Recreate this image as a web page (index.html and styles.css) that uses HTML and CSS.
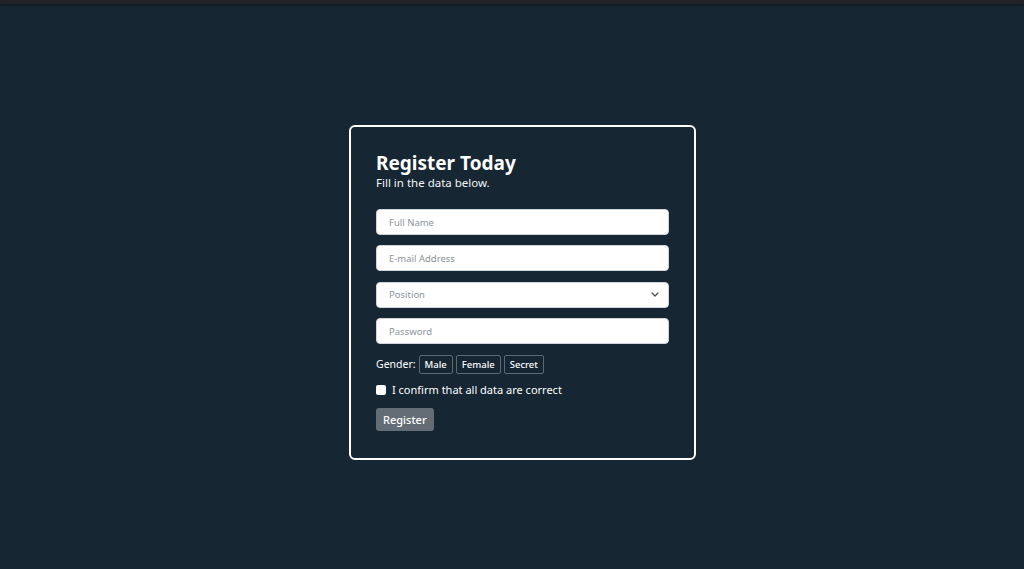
FILE: index.html
```html
<!DOCTYPE html>
<html>
<head>
<meta charset="utf-8">
<link rel="stylesheet" href="styles.css">
</head>
<body>
<div class="topbar"></div>
<main class="stage">
  <form class="card">
    <h1 class="title">Register Today</h1>
    <p class="subtitle">Fill in the data below.</p>
    <div class="fields">
      <input class="field" type="text" placeholder="Full Name">
      <input class="field" type="text" placeholder="E-mail Address">
      <div class="field select">
        <span class="placeholder">Position</span>
        <svg class="chev" width="8" height="5" viewBox="0 0 8 5"><path d="M1 1l3 3 3-3" fill="none" stroke="#4a5056" stroke-width="1.3" stroke-linecap="round" stroke-linejoin="round"/></svg>
      </div>
      <input class="field" type="password" placeholder="Password">
    </div>
    <div class="gender">
      <span class="gender-label">Gender:</span>
      <span class="chip">Male</span>
      <span class="chip">Female</span>
      <span class="chip">Secret</span>
    </div>
    <label class="confirm"><span class="box"></span>I confirm that all data are correct</label>
    <button class="submit" type="button">Register</button>
  </form>
</main>
</body>
</html>
```

FILE: styles.css
```css
html, body {
  margin: 0;
  padding: 0;
  background: #162633;
  height: 100%;
  font-family: "Noto Sans", "Open Sans", sans-serif;
  color: #ffffff;
}
.topbar {
  height: 4px;
  background: #232227;
  box-shadow: 0 1px 3px rgba(0,0,0,0.45);
}
.stage {
  display: flex;
  justify-content: center;
  padding-top: 121px;
  padding-left: 21px;
}
.card {
  width: 293px;
  padding: 24px 25px 27px;
  border: 2px solid #ffffff;
  border-radius: 6px;
  box-sizing: content-box;
  margin: 0;
}
.title {
  margin: 0;
  font-size: 19px;
  line-height: 24px;
  font-weight: 700;
  letter-spacing: 0;
}
.subtitle {
  margin: 0;
  font-size: 11.5px;
  line-height: 15px;
  color: #f2f4f6;
}
.fields {
  display: flex;
  flex-direction: column;
  gap: 10.4px;
  margin-top: 19px;
}
.field {
  box-sizing: border-box;
  display: block;
  width: 100%;
  height: 26px;
  margin: 0;
  border: 1px solid #ced4da;
  border-radius: 4px;
  background: #ffffff;
  padding: 0 12px;
  font-family: inherit;
  font-size: 9.5px;
  color: #212529;
  outline: none;
}
.field::placeholder {
  color: #8c939b;
}
.select {
  display: flex;
  align-items: center;
  justify-content: space-between;
  padding-right: 9px;
}
.placeholder {
  font-size: 9.5px;
  color: #8c939b;
}
.gender {
  display: flex;
  align-items: center;
  gap: 3px;
  margin-top: 10px;
  height: 20px;
}
.gender-label {
  font-size: 10.5px;
  margin-right: 0;
}
.chip {
  box-sizing: border-box;
  height: 19px;
  line-height: 17px;
  padding: 0 5px;
  border: 1px solid #5c6873;
  border-radius: 2px;
  font-size: 9.5px;
  font-weight: 500;
}
.confirm {
  display: flex;
  align-items: center;
  gap: 6px;
  margin-top: 8px;
  font-size: 11px;
  line-height: 16px;
}
.box {
  width: 10px;
  height: 10px;
  background: #ffffff;
  border-radius: 2px;
}
.submit {
  display: block;
  margin-top: 10px;
  height: 23px;
  padding: 0 7px;
  border: 0;
  border-radius: 3px;
  background: #646d76;
  color: #ffffff;
  font-family: inherit;
  font-size: 11px;
  font-weight: 500;
}
```
